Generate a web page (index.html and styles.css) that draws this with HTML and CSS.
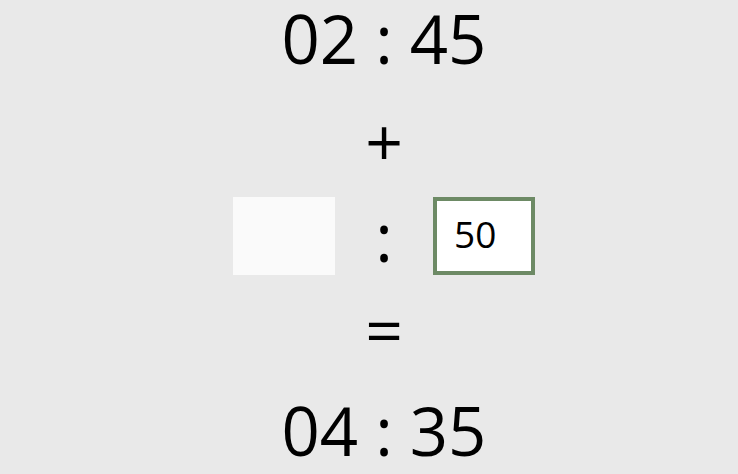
FILE: index.html
```html
<!DOCTYPE html>
<html lang="en">
<head>
<meta charset="utf-8">
<title>Time addition</title>
<link rel="stylesheet" href="styles.css">
</head>
<body>
<main class="calc">
  <div class="time time-top"><span>02</span><span class="colon">:</span><span>45</span></div>
  <div class="op op-plus">+</div>
  <div class="entry">
    <div class="box box-empty"></div>
    <div class="sep">:</div>
    <div class="box box-active">50</div>
  </div>
  <div class="op op-eq">=</div>
  <div class="time time-bottom"><span>04</span><span class="colon">:</span><span>35</span></div>
</main>
</body>
</html>
```
FILE: styles.css
```css
html, body {
  margin: 0;
  padding: 0;
  background: #e9e9e9;
}
body {
  width: 738px;
  height: 474px;
  overflow: hidden;
  font-family: "Open Sans", "Noto Sans", sans-serif;
  color: #000;
}
.calc {
  display: flex;
  flex-direction: column;
  align-items: center;
  padding-left: 30px;
}
.time {
  display: flex;
  gap: 17px;
  font-size: 67px;
  line-height: 76px;
}
.op {
  font-size: 66px;
  line-height: 90px;
}
.op-plus {
  margin-top: 19px;
}
.entry {
  margin-top: 12px;
  display: flex;
  align-items: center;
  gap: 32px;
}
.box {
  box-sizing: border-box;
  width: 102px;
  height: 78px;
}
.box-empty {
  background: #fafafa;
}
.box-active {
  background: #fff;
  border: 4px solid #6d8a65;
  font-size: 37px;
  line-height: 66px;
  padding-left: 17px;
}
.sep {
  font-size: 67px;
  line-height: 78px;
  width: 34px;
  text-align: center;
}
.op-eq {
  margin-top: 8px;
}
.time-bottom {
  margin-top: 19px;
}
```
